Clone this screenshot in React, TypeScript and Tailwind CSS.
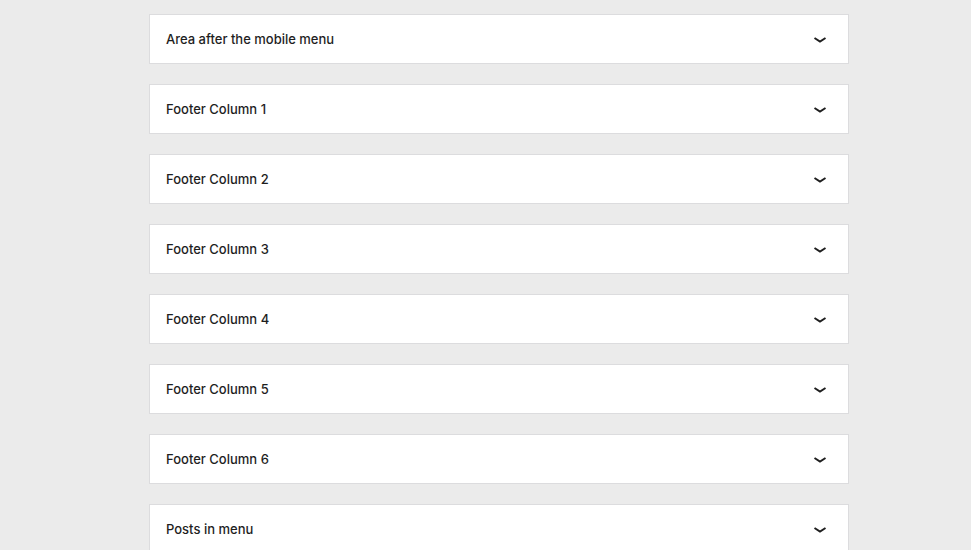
import React, { FC } from 'react';

const panels = [
  'Area after the mobile menu',
  'Footer Column 1',
  'Footer Column 2',
  'Footer Column 3',
  'Footer Column 4',
  'Footer Column 5',
  'Footer Column 6',
  'Posts in menu',
];

const Chevron: FC = () => (
  <svg width="14" height="8" viewBox="0 0 14 8" fill="none" className="mt-[1px] text-[#1e1e1e]">
    <path d="M1.5 2 L7 5.5 L12.5 2" stroke="currentColor" strokeWidth="2" />
  </svg>
);

const App: FC = () => {
  return (
    <div className="min-h-[550px] bg-[#ebebeb] pt-[14px] pl-[149px] font-['Inter',sans-serif]">
      <div className="w-[700px] space-y-[20px]">
        {panels.map((title) => (
          <div
            key={title}
            className="flex h-[50px] items-center justify-between border border-[#dcdcde] bg-white pl-4 pr-[21px]"
          >
            <h2 className="pt-[2px] text-[13px] font-medium text-[#1e1e1e]">{title}</h2>
            <Chevron />
          </div>
        ))}
      </div>
    </div>
  );
};

export default App;
